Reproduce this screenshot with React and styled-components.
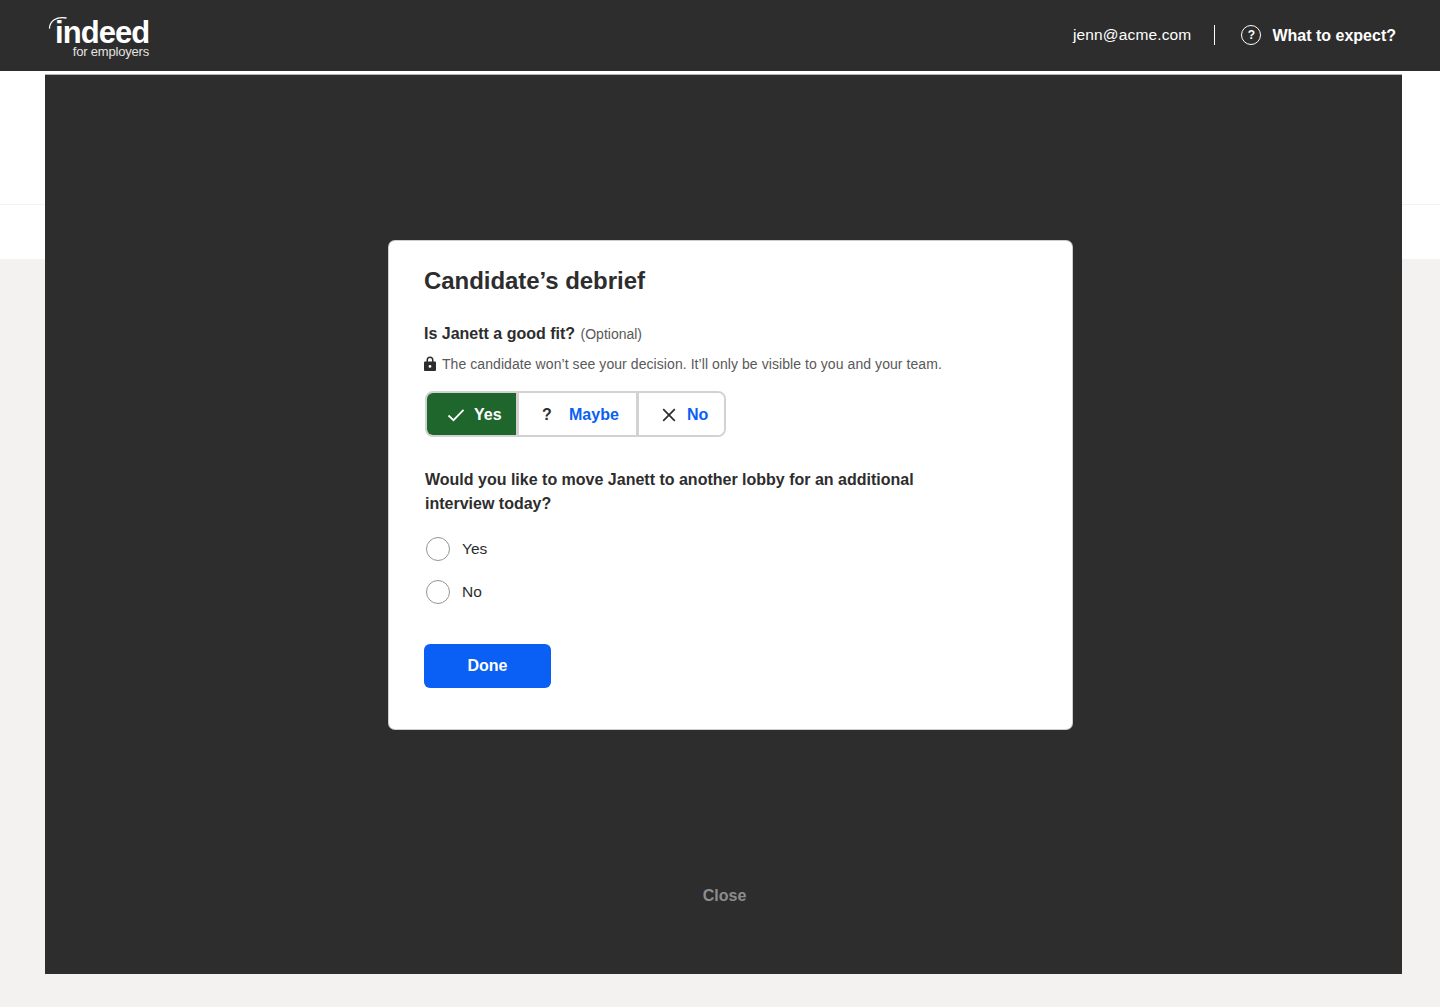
import React from "react";
import styled, { createGlobalStyle } from "styled-components";

const GlobalStyle = createGlobalStyle`
  html, body {
    margin: 0;
    padding: 0;
    background: #f3f2f1;
    font-family: "Liberation Sans", Arial, sans-serif;
    color: #2d2d2d;
  }
  * { box-sizing: border-box; }
`;

function CheckIcon() {
  return (
    <svg width="18" height="14" viewBox="0 0 18 14" fill="none">
      <path d="M1.5 7.5 L6.5 12.2 L16.5 1.8" stroke="#fff" strokeWidth="1.8" />
    </svg>
  );
}

function CrossIcon() {
  return (
    <svg width="14" height="14" viewBox="0 0 14 14" fill="none">
      <path d="M1.2 1.2 L12.8 12.8 M12.8 1.2 L1.2 12.8" stroke="#2d2d2d" strokeWidth="1.7" />
    </svg>
  );
}

function LockIcon() {
  return (
    <LockSvg width="12" height="15" viewBox="0 0 12 15">
      <path
        fill="#2d2d2d"
        fillRule="evenodd"
        d="M2.5 5.5 V4 a3.5 3.5 0 0 1 7 0 v1.5 H11 a1 1 0 0 1 1 1 V14 a1 1 0 0 1 -1 1 H1 a1 1 0 0 1 -1 -1 V6.5 a1 1 0 0 1 1 -1 Z M4 5.5 h4 V4 a2 2 0 0 0 -4 0 Z M6 9 a1.4 1.4 0 1 0 0 2.8 a1.4 1.4 0 0 0 0 -2.8 Z"
      />
    </LockSvg>
  );
}

export default function App() {
  return (
    <>
      <GlobalStyle />
      <Page>
        <Header>
          <Logo>
            <LogoArc width="20" height="14" viewBox="0 0 20 14" fill="none">
              <path d="M1.5 12 C2 5 8 0.5 18 2" stroke="#fff" strokeWidth="1.3" strokeLinecap="round" />
            </LogoArc>
            <LogoWord>indeed</LogoWord>
            <LogoSub>for employers</LogoSub>
          </Logo>
          <HeaderRight>
            <Email>jenn@acme.com</Email>
            <Divider />
            <HelpCircle>?</HelpCircle>
            <HelpText>What to expect?</HelpText>
          </HeaderRight>
        </Header>
        <Band>
          <BandRow />
        </Band>

        <Overlay>
          <Modal>
            <Title>Candidate’s debrief</Title>
            <Question>
              Is Janett a good fit? <Optional>(Optional)</Optional>
            </Question>
            <Notice>
              <LockIcon />
              The candidate won’t see your decision. It’ll only be visible to you and your team.
            </Notice>
            <Segments>
              <Segment $width={92} $pad={20} $gap={9} $active>
                <CheckIcon />
                Yes
              </Segment>
              <Segment $width={120} $pad={21} $gap={15}>
                <QuestionMark>?</QuestionMark>
                Maybe
              </Segment>
              <Segment $width={85} $pad={23} $gap={11} $last>
                <CrossIcon />
                No
              </Segment>
            </Segments>
            <SecondQuestion>
              Would you like to move Janett to another lobby for an additional interview today?
            </SecondQuestion>
            <RadioGroup>
              <RadioRow>
                <RadioCircle />
                Yes
              </RadioRow>
              <RadioRow>
                <RadioCircle />
                No
              </RadioRow>
            </RadioGroup>
            <DoneButton>Done</DoneButton>
          </Modal>
          <CloseLink>Close</CloseLink>
        </Overlay>
      </Page>
    </>
  );
}

const Page = styled.div`
  position: relative;
  width: 100%;
  height: 1007px;
  overflow: hidden;
  background: #f3f2f1;
`;

const Header = styled.header`
  height: 71px;
  background: #2d2d2d;
  display: flex;
  align-items: center;
  justify-content: space-between;
  padding: 0 44px 0 48px;
`;

const Logo = styled.div`
  position: relative;
  width: 104px;
  height: 46px;
  margin-top: 1px;
  color: #fff;
`;

const LogoArc = styled.svg`
  position: absolute;
  left: 0;
  top: 3px;
`;

const LogoWord = styled.div`
  position: absolute;
  left: 7px;
  top: 9px;
  font-size: 31px;
  line-height: 22px;
  font-weight: 700;
  letter-spacing: -0.95px;
`;

const LogoSub = styled.div`
  position: absolute;
  right: 3px;
  top: 32px;
  font-size: 13px;
  line-height: 14px;
  letter-spacing: -0.2px;
  white-space: nowrap;
  color: #e4e2e0;
`;

const HeaderRight = styled.div`
  display: flex;
  align-items: center;
  color: #fff;
`;

const Email = styled.span`
  font-size: 15.5px;
  line-height: 20px;
  letter-spacing: 0.15px;
  margin-top: -1px;
`;

const Divider = styled.span`
  width: 1px;
  height: 20px;
  margin: -1px 26px 0 23px;
  background: #fff;
`;

const HelpCircle = styled.span`
  width: 20px;
  height: 20px;
  margin: -1px 11px 0 0;
  border: 1.5px solid #fff;
  border-radius: 50%;
  display: flex;
  align-items: center;
  justify-content: center;
  font-size: 12px;
  font-weight: 700;
`;

const HelpText = styled.span`
  font-size: 16px;
  line-height: 20px;
  font-weight: 700;
`;

const Band = styled.div`
  height: 188px;
  background: #fff;
  padding-top: 133px;
`;

const BandRow = styled.div`
  height: 1px;
  background: #f3f2f1;
`;

const Overlay = styled.div`
  position: absolute;
  left: 45px;
  top: 74px;
  width: 1357px;
  height: 900px;
  background: #2d2d2d;
  border-top: 1px solid #b5b3b1;
  padding-top: 166px;
  display: flex;
  flex-direction: column;
`;

const Modal = styled.div`
  width: 683px;
  height: 488px;
  margin-left: 344px;
  padding: 25px 35px 0;
  background: #fff;
  border-radius: 6px;
  box-shadow: 0 0 0 1px #cfcdcb;
`;

const Title = styled.h2`
  margin: 0;
  font-size: 24px;
  line-height: 29px;
  font-weight: 700;
  letter-spacing: -0.05px;
`;

const Question = styled.div`
  margin-top: 29px;
  font-size: 16px;
  line-height: 20px;
  font-weight: 700;
`;

const Optional = styled.span`
  margin-left: 1px;
  font-size: 14px;
  font-weight: 400;
  color: #595959;
`;

const Notice = styled.div`
  margin-top: 10px;
  display: flex;
  align-items: center;
  gap: 6px;
  font-size: 14px;
  line-height: 20px;
  letter-spacing: 0.07px;
  color: #595959;
  white-space: nowrap;
`;

const LockSvg = styled.svg`
  margin-top: -2px;
`;

const Segments = styled.div`
  margin-top: 17px;
  margin-left: 1px;
  width: fit-content;
  height: 46px;
  display: flex;
  border: 2px solid #d4d2d0;
  border-radius: 8px;
  overflow: hidden;
`;

const Segment = styled.div`
  width: ${(p) => p.$width}px;
  padding: 1px 0 0 ${(p) => p.$pad}px;
  display: flex;
  align-items: center;
  gap: ${(p) => p.$gap}px;
  font-size: 16px;
  font-weight: 700;
  color: ${(p) => (p.$active ? "#fff" : "#0a5ff5")};
  background: ${(p) => (p.$active ? "#1f662c" : "#fff")};
  border-right: ${(p) => (p.$last ? "none" : "3px solid #d4d2d0")};
`;

const QuestionMark = styled.span`
  width: 14px;
  text-align: center;
  color: #2d2d2d;
  font-size: 16px;
  font-weight: 700;
`;

const SecondQuestion = styled.div`
  margin: 31px 0 0 1px;
  width: 520px;
  font-size: 16px;
  line-height: 24px;
  font-weight: 700;
`;

const RadioGroup = styled.div`
  margin: 21px 0 0 2px;
  display: flex;
  flex-direction: column;
  gap: 19px;
`;

const RadioRow = styled.div`
  height: 24px;
  display: flex;
  align-items: center;
  gap: 12px;
  font-size: 15.5px;
  color: #2d2d2d;
`;

const RadioCircle = styled.span`
  width: 24px;
  height: 24px;
  border: 1px solid #949494;
  border-radius: 50%;
  background: #fff;
`;

const DoneButton = styled.button`
  display: block;
  width: 127px;
  height: 44px;
  margin-top: 40px;
  border: none;
  border-radius: 6px;
  background: #0a5ff5;
  color: #fff;
  font-family: inherit;
  font-size: 16px;
  font-weight: 700;
`;

const CloseLink = styled.div`
  margin-top: 157px;
  text-align: center;
  margin-left: 2px;
  font-size: 16px;
  line-height: 20px;
  font-weight: 700;
  color: #8c8c8c;
`;
